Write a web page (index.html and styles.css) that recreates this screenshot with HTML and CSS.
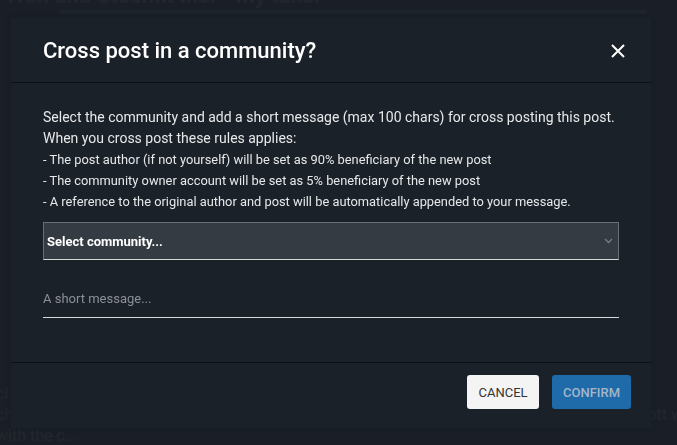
FILE: index.html
```html
<!DOCTYPE html>
<html lang="en">
<head>
<meta charset="utf-8">
<title>Cross post in a community?</title>
<link rel="stylesheet" href="styles.css">
</head>
<body>
<div class="page">
  <h1 class="page-title">Tron and Steemit Inc. - My take.</h1>
  <div class="page-bar"></div>
  <div class="page-text">
    <p class="page-line">cl</p>
    <p class="page-line page-line-split"><span>ch</span><span>ott w</span></p>
    <p class="page-line">with the c...</p>
  </div>
</div>
<div class="backdrop"></div>
<div class="modal" role="dialog" aria-labelledby="modal-title">
  <div class="modal-header">
    <h2 id="modal-title" class="modal-title">Cross post in a community?</h2>
    <button class="close-btn" aria-label="Close">
      <svg width="14" height="14" viewBox="0 0 14 14"><path d="M1 1L13 13M13 1L1 13" stroke="#fff" stroke-width="2" fill="none"/></svg>
    </button>
  </div>
  <div class="modal-body">
    <p class="intro">Select the community and add a short message (max 100 chars) for cross posting this post.<br>When you cross post these rules applies:</p>
    <ul class="rules">
      <li>- The post author (if not yourself) will be set as 90% beneficiary of the new post</li>
      <li>- The community owner account will be set as 5% beneficiary of the new post</li>
      <li>- A reference to the original author and post will be automatically appended to your message.</li>
    </ul>
    <div class="select">
      <span class="select-label">Select community...</span>
      <svg class="chevron" width="9" height="6" viewBox="0 0 9 6"><path d="M1 1L4.5 4.5L8 1" stroke="#767c83" stroke-width="1.3" fill="none"/></svg>
    </div>
    <div class="field">
      <input class="field-input" type="text" placeholder="A short message...">
    </div>
  </div>
  <div class="modal-footer">
    <button class="btn btn-cancel">CANCEL</button>
    <button class="btn btn-confirm">CONFIRM</button>
  </div>
</div>
</body>
</html>
```
FILE: styles.css
```css
html, body {
  margin: 0;
  padding: 0;
  height: 100%;
}
body {
  background: #1b2128;
  font-family: Roboto, "Liberation Sans", sans-serif;
  overflow: hidden;
}
.page {
  color: #333a42;
}
.page-title {
  margin: -17px 0 0 4px;
  font-size: 22px;
  font-weight: 700;
  line-height: 26px;
  color: #2a3037;
  white-space: nowrap;
}
.page-bar {
  margin: 1px 30px 0 60px;
  height: 4px;
  background: #242a31;
}
.page-text {
  margin-top: 369px;
}
.page-line {
  margin: 0;
  font-size: 16px;
  line-height: 21px;
  color: #2c3239;
  margin-left: -4px;
  white-space: nowrap;
}
.page-line-split {
  display: flex;
  justify-content: space-between;
  margin-right: -6px;
}
.backdrop {
  position: fixed;
  inset: 0;
  background: rgba(26, 31, 38, 0.55);
}
.modal {
  position: fixed;
  left: 11px;
  top: 18px;
  width: 640px;
  background: #1b2128;
  box-shadow: 0 0 6px rgba(0, 0, 0, 0.15);
  display: flex;
  flex-direction: column;
}
.modal-header {
  height: 65px;
  display: flex;
  align-items: center;
  justify-content: space-between;
  padding: 0 26px 0 32px;
  border-bottom: 1px solid #0c1015;
  box-sizing: border-box;
}
.modal-title {
  margin: 0;
  font-size: 22px;
  font-weight: 500;
  color: #ffffff;
}
.close-btn {
  background: none;
  border: none;
  padding: 0;
  width: 14px;
  height: 14px;
  display: flex;
  cursor: pointer;
  margin-top: 2px;
}
.modal-body {
  padding: 24px 32px 44px;
  color: #e6e8ea;
}
.intro {
  margin: 0;
  font-size: 14px;
  line-height: 21px;
}
.rules {
  list-style: none;
  margin: 0;
  padding: 0;
  font-size: 12.85px;
  line-height: 21px;
}
.select {
  margin-top: 10px;
  height: 38px;
  box-sizing: border-box;
  background: #343b42;
  border: 1px solid #6b6f74;
  border-bottom-color: #d6d6d6;
  display: flex;
  align-items: center;
  justify-content: space-between;
  padding: 0 5px 0 3px;
}
.select-label {
  font-size: 13px;
  font-weight: 700;
  color: #ffffff;
}
.field {
  margin-top: 20px;
  border-bottom: 1px solid #d8d8d8;
}
.field-input {
  display: block;
  width: 100%;
  height: 37px;
  box-sizing: border-box;
  background: transparent;
  border: none;
  outline: none;
  padding: 0;
  font-family: Roboto, "Liberation Sans", sans-serif;
  font-size: 13px;
  color: #ffffff;
}
.field-input::placeholder {
  color: #8b9096;
}
.modal-footer {
  border-top: 1px solid #0c1015;
  display: flex;
  justify-content: flex-end;
  gap: 13px;
  padding: 12px 20px 19px;
}
.btn {
  height: 34px;
  border: none;
  border-radius: 3px;
  font-family: Roboto, "Liberation Sans", sans-serif;
  font-size: 13px;
  padding: 0;
  cursor: pointer;
}
.btn-cancel {
  width: 72px;
  background: #f4f4f4;
  color: #333333;
  font-weight: 400;
}
.btn-confirm {
  width: 79px;
  background: #1f6aa8;
  color: #a3b6c9;
  font-weight: 500;
}
```
